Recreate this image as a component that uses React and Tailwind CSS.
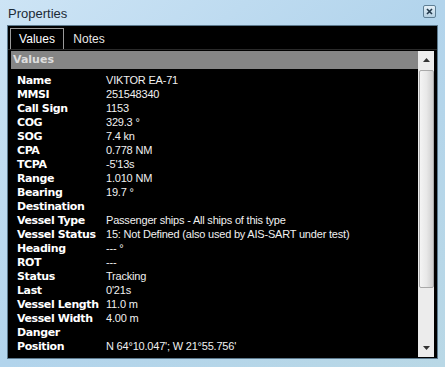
import React from 'react';

const rows = [
  ['Name', 'VIKTOR EA-71'],
  ['MMSI', '251548340'],
  ['Call Sign', '1153'],
  ['COG', '329.3 °'],
  ['SOG', '7.4 kn'],
  ['CPA', '0.778 NM'],
  ['TCPA', '-5\'13s'],
  ['Range', '1.010 NM'],
  ['Bearing', '19.7 °'],
  ['Destination', ''],
  ['Vessel Type', 'Passenger ships - All ships of this type'],
  ['Vessel Status', '15: Not Defined (also used by AIS-SART under test)'],
  ['Heading', '--- °'],
  ['ROT', '---'],
  ['Status', 'Tracking'],
  ['Last', '0\'21s'],
  ['Vessel Length', '11.0 m'],
  ['Vessel Width', '4.00 m'],
  ['Danger', ''],
  ['Position', 'N 64°10.047\'; W 21°55.756\''],
];

export default function App() {
  return (
    <div
      className="w-[445px] h-[367px] overflow-hidden bg-gradient-to-br from-[#cde4f5] via-[#b2d4ec] to-[#b9d8e6] flex flex-col"
      style={{ fontFamily: '"Liberation Sans", Arial, sans-serif' }}
    >
      {/* title bar */}
      <div className="h-[25px] flex items-start justify-between pl-[8px] pr-[9px]">
        <span className="text-[13px] text-[#1b2a36] mt-[4px]">Properties</span>
        <div className="mt-[5px] w-[13px] h-[13px] border border-[#5f7f95] rounded-[2px] bg-gradient-to-b from-[#e4f0f8] to-[#b5d0e2] flex items-center justify-center">
          <svg width="7" height="7" viewBox="0 0 7 7">
            <path d="M1 1 L6 6 M6 1 L1 6" stroke="#22384a" strokeWidth="1.6" />
          </svg>
        </div>
      </div>

      {/* black panel */}
      <div className="mx-[7px] h-[334px] border border-[#5d7a8e] bg-black flex flex-col">
        {/* tabs */}
        <div className="h-[24px] flex items-end pl-[2px] border-b border-[#2a2a2a]">
          <div className="h-[21px] w-[54px] border-t border-l border-r border-[#9a9a9a] flex items-center justify-center text-[12px] text-white">
            Values
          </div>
          <div className="h-[21px] w-[50px] flex items-center justify-center text-[12px] text-[#e8e8e8]">
            Notes
          </div>
        </div>

        <div className="flex flex-1 pl-[3px] pr-[3px] pt-[1px] pb-[1px]">
          <div className="flex-1 flex flex-col">
            <div className="h-[18px] bg-[#858585] flex items-center pl-[2px] text-[11px] font-bold text-[#dedede]" style={{ fontFamily: '"DejaVu Sans", Verdana, sans-serif' }}>
              Values
            </div>
            <div className="pt-[4px] pl-[6px]">
              {rows.map(([k, v]) => (
                <div key={k} className="h-[14px] flex items-center leading-none">
                  <span className="w-[89px] shrink-0 text-[11px] font-bold text-white" style={{ fontFamily: '"DejaVu Sans", Verdana, sans-serif', letterSpacing: '-0.4px' }}>{k}</span>
                  <span className="text-[11px] text-[#f0f0f0] whitespace-nowrap" style={{ letterSpacing: '-0.2px' }}>{v}</span>
                </div>
              ))}
            </div>
          </div>

          {/* scrollbar */}
          <div className="w-[16px] bg-[#ececec] flex flex-col items-center">
            <div className="h-[18px] w-full flex items-center justify-center">
              <svg width="7" height="4" viewBox="0 0 7 4"><path d="M0 4 L3.5 0 L7 4 Z" fill="#333" /></svg>
            </div>
            <div className="h-[218px] w-[15px] mt-[1px] rounded-[2px] border border-[#a9a9a9] bg-gradient-to-r from-[#f4f4f4] via-[#e8e8e8] to-[#cfcfcf]" />
            <div className="flex-1" />
            <div className="h-[18px] w-full flex items-center justify-center">
              <svg width="7" height="4" viewBox="0 0 7 4"><path d="M0 0 L7 0 L3.5 4 Z" fill="#333" /></svg>
            </div>
          </div>
        </div>
      </div>
    </div>
  );
}
